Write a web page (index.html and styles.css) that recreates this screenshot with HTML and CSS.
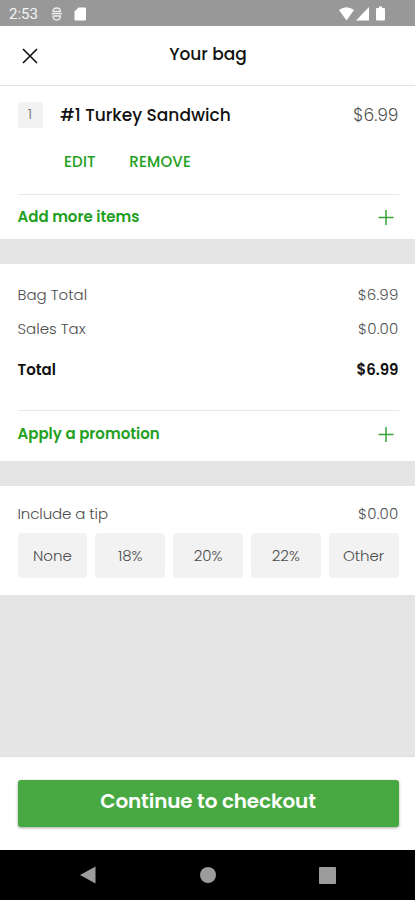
FILE: index.html
```html
<!DOCTYPE html>
<html lang="en">
<head>
<meta charset="utf-8">
<meta name="viewport" content="width=device-width, initial-scale=1">
<title>Your bag</title>
<link rel="stylesheet" href="styles.css">
</head>
<body>
<div class="status">
  <span class="clock">2:53</span>
  <svg class="status-left" width="40" height="16" viewBox="0 0 40 16">
    <path d="M3 5.500C3 3 4.500 2 6.700 2s3.700 1 3.700 3.500zM1.500 7.700h10.400M3 10h7.400c0 2.500-1.500 4-3.700 4S3 12.500 3 10z" fill="none" stroke="#ededed" stroke-width="1.300"/>
    <path d="M28.500 1.500H35q1 0 1 1v11q0 1-1 1H25.500q-1 0-1-1v-8z" fill="#fff"/>
  </svg>
  <svg class="status-right" width="48" height="16" viewBox="0 0 48 16" fill="#fff">
    <path d="M0 4Q7.500-1.500 15 4L7.500 14.500z"/>
    <path d="M30 1v13.500H17z"/>
    <path d="M38 2h2V.5h3V2h2q1 0 1 1v10.500q0 1-1 1h-7q-1 0-1-1V3q0-1 1-1z"/>
  </svg>
</div>
<header class="header">
  <svg class="close" width="16" height="16" viewBox="0 0 16 16" fill="none" stroke="#111" stroke-width="1.600"><path d="M1 1l14 14M15 1L1 15"/></svg>
  <h1 class="title">Your bag</h1>
</header>
<main class="content">
  <section class="card item-card">
    <div class="item">
      <span class="qty">1</span>
      <span class="name">#1 Turkey Sandwich</span>
      <span class="price">$6.99</span>
    </div>
    <div class="actions"><span>EDIT</span><span>REMOVE</span></div>
    <div class="link-row">
      <span>Add more items</span>
      <svg class="plus" width="16" height="16" viewBox="0 0 16 16"><path d="M.5 8.500h15M8 1v15"/></svg>
    </div>
  </section>
  <section class="card totals">
    <div class="line"><span>Bag Total</span><span class="amount">$6.99</span></div>
    <div class="line tax"><span>Sales Tax</span><span class="amount">$0.00</span></div>
    <div class="line total"><span>Total</span><span>$6.99</span></div>
    <div class="link-row promo">
      <span>Apply a promotion</span>
      <svg class="plus" width="16" height="16" viewBox="0 0 16 16"><path d="M.5 8.500h15M8 1v15"/></svg>
    </div>
  </section>
  <section class="card tip">
    <div class="line"><span class="include">Include a tip</span><span class="amount">$0.00</span></div>
    <div class="options">
      <span class="option">None</span><span class="option">18%</span><span class="option">20%</span><span class="option">22%</span><span class="option">Other</span>
    </div>
  </section>
</main>
<footer class="footer"><div class="checkout">Continue to checkout</div></footer>
<nav class="nav">
  <svg width="16" height="18" viewBox="0 0 16 18" fill="#9c9c9c"><path d="M15.500.5v17L0 9z"/></svg>
  <svg width="16" height="16" viewBox="0 0 16 16" fill="#9c9c9c"><circle cx="8" cy="8" r="8"/></svg>
  <svg width="17" height="17" viewBox="0 0 17 17" fill="#9c9c9c"><rect width="17" height="17" rx="1"/></svg>
</nav>
</body>
</html>
```
FILE: styles.css
```css
* { box-sizing: border-box; }
body {
  margin: 0;
  height: 900px;
  display: flex;
  flex-direction: column;
  overflow: hidden;
  background: #e5e5e5;
  color: #4d4d4d;
  font-family: Poppins, Inter, sans-serif;
  font-size: 15px;
  line-height: 20px;
  white-space: nowrap;
}
svg { display: block; flex: none; }
.status {
  height: 26px;
  background: #989898;
  display: flex;
  align-items: center;
  padding: 1px 28px 0 9px;
}
.clock { width: 41px; font: 15px/20px Roboto, sans-serif; color: #f4f4f4; }
.status-right { margin-left: auto; }
.header {
  height: 60px;
  background: #fff;
  border-bottom: 1px solid #e3e3e3;
  display: grid;
  grid-template-columns: 40px 1fr 40px;
  align-items: center;
  padding: 0 17px;
}
.close { margin-left: 5px; }
.title {
  margin: 0;
  text-align: center;
  font-size: 17px;
  font-weight: 500;
  color: #111;
  padding: 0 0 4px 1px;
}
.content { flex: 1; display: flex; flex-direction: column; gap: 25px; }
.card { background: #fff; padding: 0 16.5px 0 17.5px; }
.item-card { height: 153px; padding-top: 14px; }
.item { display: flex; align-items: center; height: 29px; }
.qty {
  width: 25px;
  height: 26px;
  margin-right: 17.5px;
  background: #f2f2f2;
  border-radius: 3px;
  text-align: center;
  line-height: 24px;
  color: #777;
  font-weight: 300;
}
.name { font-size: 17px; font-weight: 500; color: #111; }
.price { margin-left: auto; font-size: 17px; font-weight: 300; }
.actions {
  display: flex;
  gap: 33.5px;
  height: 65px;
  padding: 23px 0 0 46.500px;
  color: #22a022;
  font-weight: 500;
  letter-spacing: .2px;
}
.link-row {
  height: 45px;
  border-top: 1px solid #e8e8e8;
  display: flex;
  justify-content: space-between;
  align-items: center;
  padding: 0 4.500px 1px 0;
  color: #22a022;
  font-weight: 600;
}
.plus { fill: none; stroke: #39a339; stroke-width: 1.500; }
.totals { height: 197px; padding-top: 21px; }
.line { height: 20px; display: flex; justify-content: space-between; font-weight: 300; }
.amount { letter-spacing: .2px; }
.tax { margin-top: 14px; }
.total { margin-top: 21px; color: #111; font-weight: 600; }
.promo { margin-top: 30px; height: 50px; padding-bottom: 3px; }
.tip { height: 109px; padding-top: 18px; }
.include { letter-spacing: -.1px; }
.options { display: grid; grid-template-columns: repeat(5, 1fr); gap: 8px; margin-top: 9px; }
.option {
  height: 45px;
  border-radius: 4px;
  background: #f2f2f2;
  line-height: 45px;
  text-align: center;
  font-weight: 300;
}
.footer { height: 94px; background: #fff; border-top: 1px solid #ddd; padding: 23px 16.500px 0 17.500px; }
.checkout {
  height: 47px;
  border-radius: 3px;
  background: #48a942;
  box-shadow: 0 1px 3px rgba(0, 0, 0, .35);
  color: #fff;
  font-size: 20px;
  font-weight: 600;
  letter-spacing: -.15px;
  line-height: 43px;
  text-align: center;
}
.nav {
  height: 50px;
  background: #000;
  display: flex;
  justify-content: space-between;
  align-items: center;
  padding: 0 79px 0 80px;
}
```
